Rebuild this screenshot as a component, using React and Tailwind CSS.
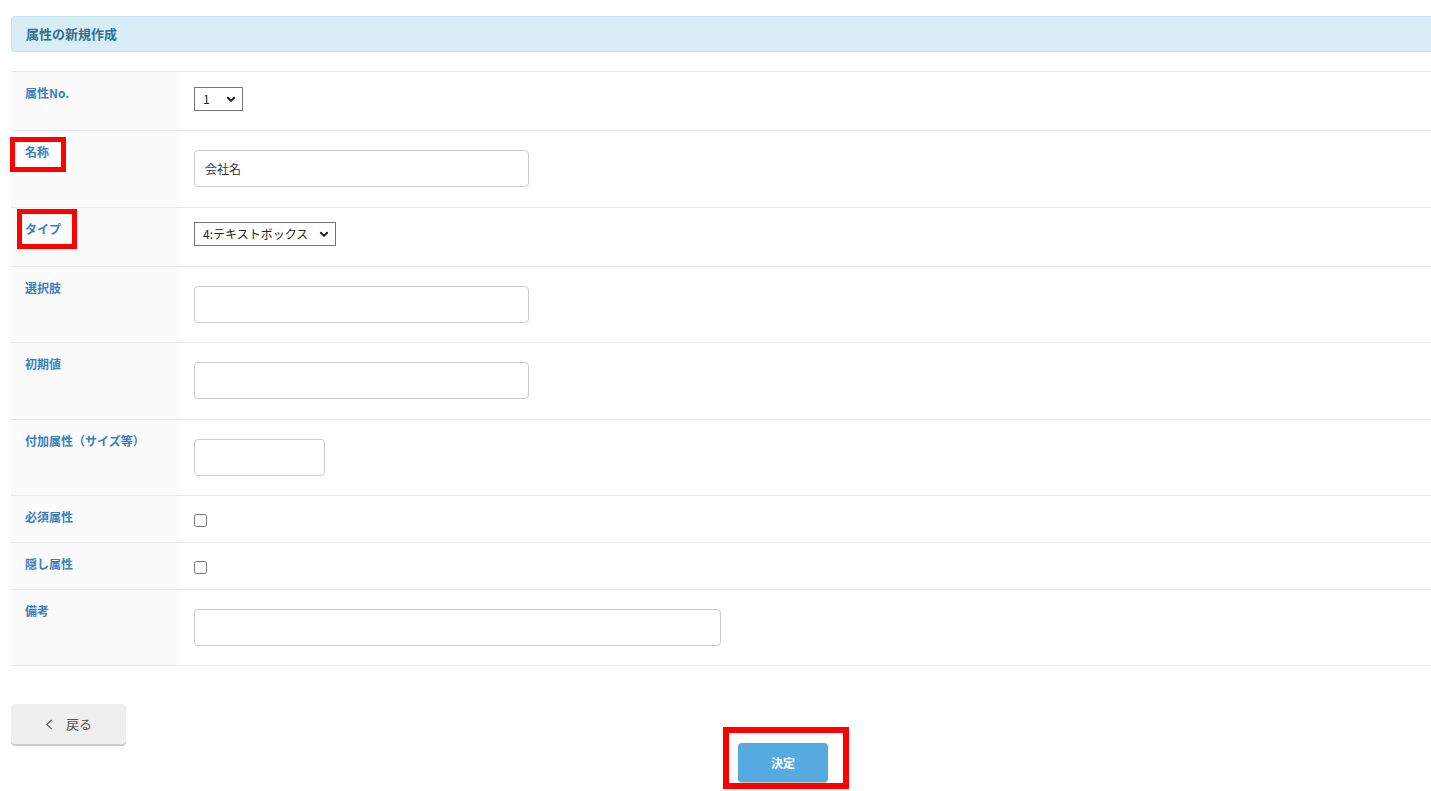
import React from "react";

const font = { fontFamily: '"Noto Sans CJK JP", "Noto Sans", sans-serif' };

function Chevron() {
  return (
    <svg viewBox="0 0 10 10" className="pointer-events-none absolute right-[7px] top-[8px] h-[9px] w-[10px]">
      <path d="M1.5 3 L5 6.5 L8.5 3" fill="none" stroke="#222" strokeWidth="2.2" strokeLinecap="round" strokeLinejoin="round" />
    </svg>
  );
}

function Select({ width, value }) {
  return (
    <div className="relative" style={{ width }}>
      <select
        defaultValue={value}
        className="block h-[24px] w-full appearance-none rounded-none border border-[#767676] bg-white pl-[8px] pr-[20px] text-[12px] text-[#222] outline-none"
      >
        <option>{value}</option>
      </select>
      <Chevron />
    </div>
  );
}

function TextInput({ w = "w-[335px]", value = "" }) {
  return (
    <input
      type="text"
      defaultValue={value}
      className={`${w} block h-[37px] rounded-[4px] border border-[#cccccc] bg-white px-[10px] text-[12px] text-[#333] outline-none`}
    />
  );
}

function Row({ label, h, pt, last, marker, children }) {
  return (
    <div className={`flex border-t border-[#e8e8e8] ${last ? "border-b" : ""} ${h}`}>
      <div className="relative w-[169px] shrink-0 bg-[#fbfbfb] px-[14px] pt-[12px]">
        <div className="text-[12px] font-bold leading-[17px] text-[#3a7fc1]">{label}</div>
        {marker}
      </div>
      <div className={`flex-1 bg-white pl-[14px] ${pt}`}>{children}</div>
    </div>
  );
}

export default function App() {
  return (
    <div className="min-h-screen overflow-hidden bg-white pl-[11px] pt-[16px]" style={font}>
      <div className="flex h-[36px] items-center rounded-l-[4px] border border-r-0 border-[#bce8f1] bg-[#d9edf7] pl-[14px]">
        <span className="text-[13px] font-bold text-[#31708f]">属性の新規作成</span>
      </div>

      <div className="mt-[19px]">
        <Row label="属性No." h="h-[59px]" pt="pt-[15px]">
          <Select width={49} value="1" />
        </Row>
        <Row
          label="名称"
          h="h-[77px]"
          pt="pt-[19px]"
          marker={<div className="absolute left-[-1px] top-[6px] h-[35px] w-[56px] border-[5px] border-[#ff0000]" />}
        >
          <TextInput value="会社名" />
        </Row>
        <Row
          label="タイプ"
          h="h-[59px]"
          pt="pt-[14px]"
          marker={<div className="absolute left-[6px] top-[1px] h-[40px] w-[60px] border-[5px] border-[#ff0000]" />}
        >
          <Select width={142} value="4:テキストボックス" />
        </Row>
        <Row label="選択肢" h="h-[76px]" pt="pt-[19px]">
          <TextInput />
        </Row>
        <Row label="初期値" h="h-[77px]" pt="pt-[19px]">
          <TextInput />
        </Row>
        <Row label="付加属性（サイズ等）" h="h-[76px]" pt="pt-[19px]">
          <TextInput w="w-[131px]" />
        </Row>
        <Row label="必須属性" h="h-[47px]" pt="pt-[18px]">
          <input type="checkbox" className="m-0 block h-[13px] w-[13px]" />
        </Row>
        <Row label="隠し属性" h="h-[47px]" pt="pt-[18px]">
          <input type="checkbox" className="m-0 block h-[13px] w-[13px]" />
        </Row>
        <Row label="備考" h="h-[77px]" pt="pt-[19px]" last>
          <TextInput w="w-[527px]" />
        </Row>
      </div>

      <button className="mt-[38px] flex h-[40px] w-[115px] items-center justify-center gap-[13px] rounded-[4px] bg-[#efefef] text-[13px] text-[#555] shadow-[0_2px_0_#cfcfcf]">
        <svg viewBox="0 0 8 12" className="h-[11px] w-[8px]">
          <path d="M7 1 L1.5 6 L7 11" fill="none" stroke="#555" strokeWidth="1.2" />
        </svg>
        <span>戻る</span>
      </button>

      <div className="relative ml-[727px] mt-[-1px] w-[90px]">
        <div className="absolute left-[-15px] top-[-16px] h-[62px] w-[126px] border-[6px] border-[#ff0000]" />
        <button className="relative flex h-[39px] w-[90px] items-center justify-center rounded-[4px] bg-[#55aadf] text-[12px] font-bold text-white shadow-[0_1px_1px_rgba(0,0,0,0.25)]">
          決定
        </button>
      </div>
    </div>
  );
}
